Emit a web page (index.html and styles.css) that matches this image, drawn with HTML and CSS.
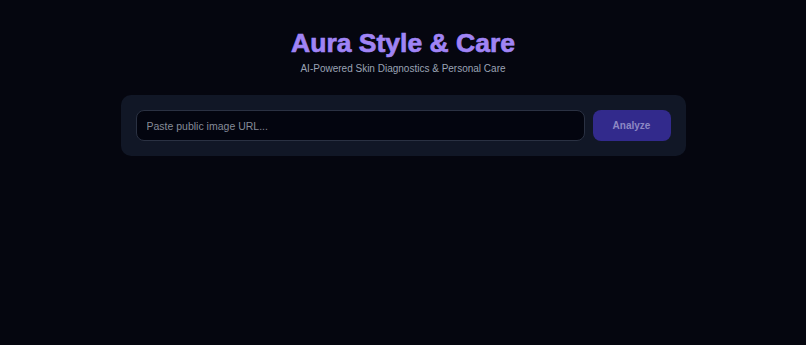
FILE: index.html
```html
<!DOCTYPE html>
<html>

<head>
  <title>Aura Style &amp; Care</title>
  <meta name="viewport" content="width=device-width, initial-scale=1">
  <link rel="stylesheet" href="styles.css">
</head>

<body>

  <div class="header">
    <h1 class="title">Aura Style &amp; Care</h1>
    <p class="subtitle">AI-Powered Skin Diagnostics &amp; Personal Care</p>
  </div>

  <div class="card">
    <input type="text" class="urlInput" placeholder="Paste public image URL...">
    <button class="analyzeBtn">Analyze</button>
  </div>

</body>

</html>
```

FILE: styles.css
```css
* {
  box-sizing: border-box;
}

body {
  margin: 0;
  background: #05060f;
  font-family: "Liberation Sans", Arial, sans-serif;
  color: #e5e7eb;
}

/* Title block */
.header {
  text-align: center;
  padding-top: 28px;
}

.title {
  margin: 0;
  font-size: 26.5px;
  font-weight: bold;
  color: #a084f5;
  line-height: 30px;
  -webkit-text-stroke: 0.7px #a084f5;
}

.subtitle {
  margin: 5px 0 0 0;
  font-size: 10px;
  color: #9aa3b5;
}

/* Search card */
.card {
  width: 565px;
  margin: 21px auto 0 auto;
  padding: 15px;
  background: #111726;
  border-radius: 10px;
  display: flex;
  gap: 8px;
}

.urlInput {
  flex: 1;
  height: 31px;
  padding: 0 10px;
  background: #03050f;
  border: 1px solid #2a3142;
  border-radius: 8px;
  font-family: inherit;
  font-size: 10.5px;
  color: #e5e7eb;
  outline: none;
}

.urlInput::placeholder {
  color: #858b99;
}

.analyzeBtn {
  width: 78px;
  height: 31px;
  border: none;
  border-radius: 8px;
  background: #322a8c;
  color: #8d88c4;
  font-family: inherit;
  font-size: 10px;
  font-weight: bold;
  cursor: pointer;
}
```
